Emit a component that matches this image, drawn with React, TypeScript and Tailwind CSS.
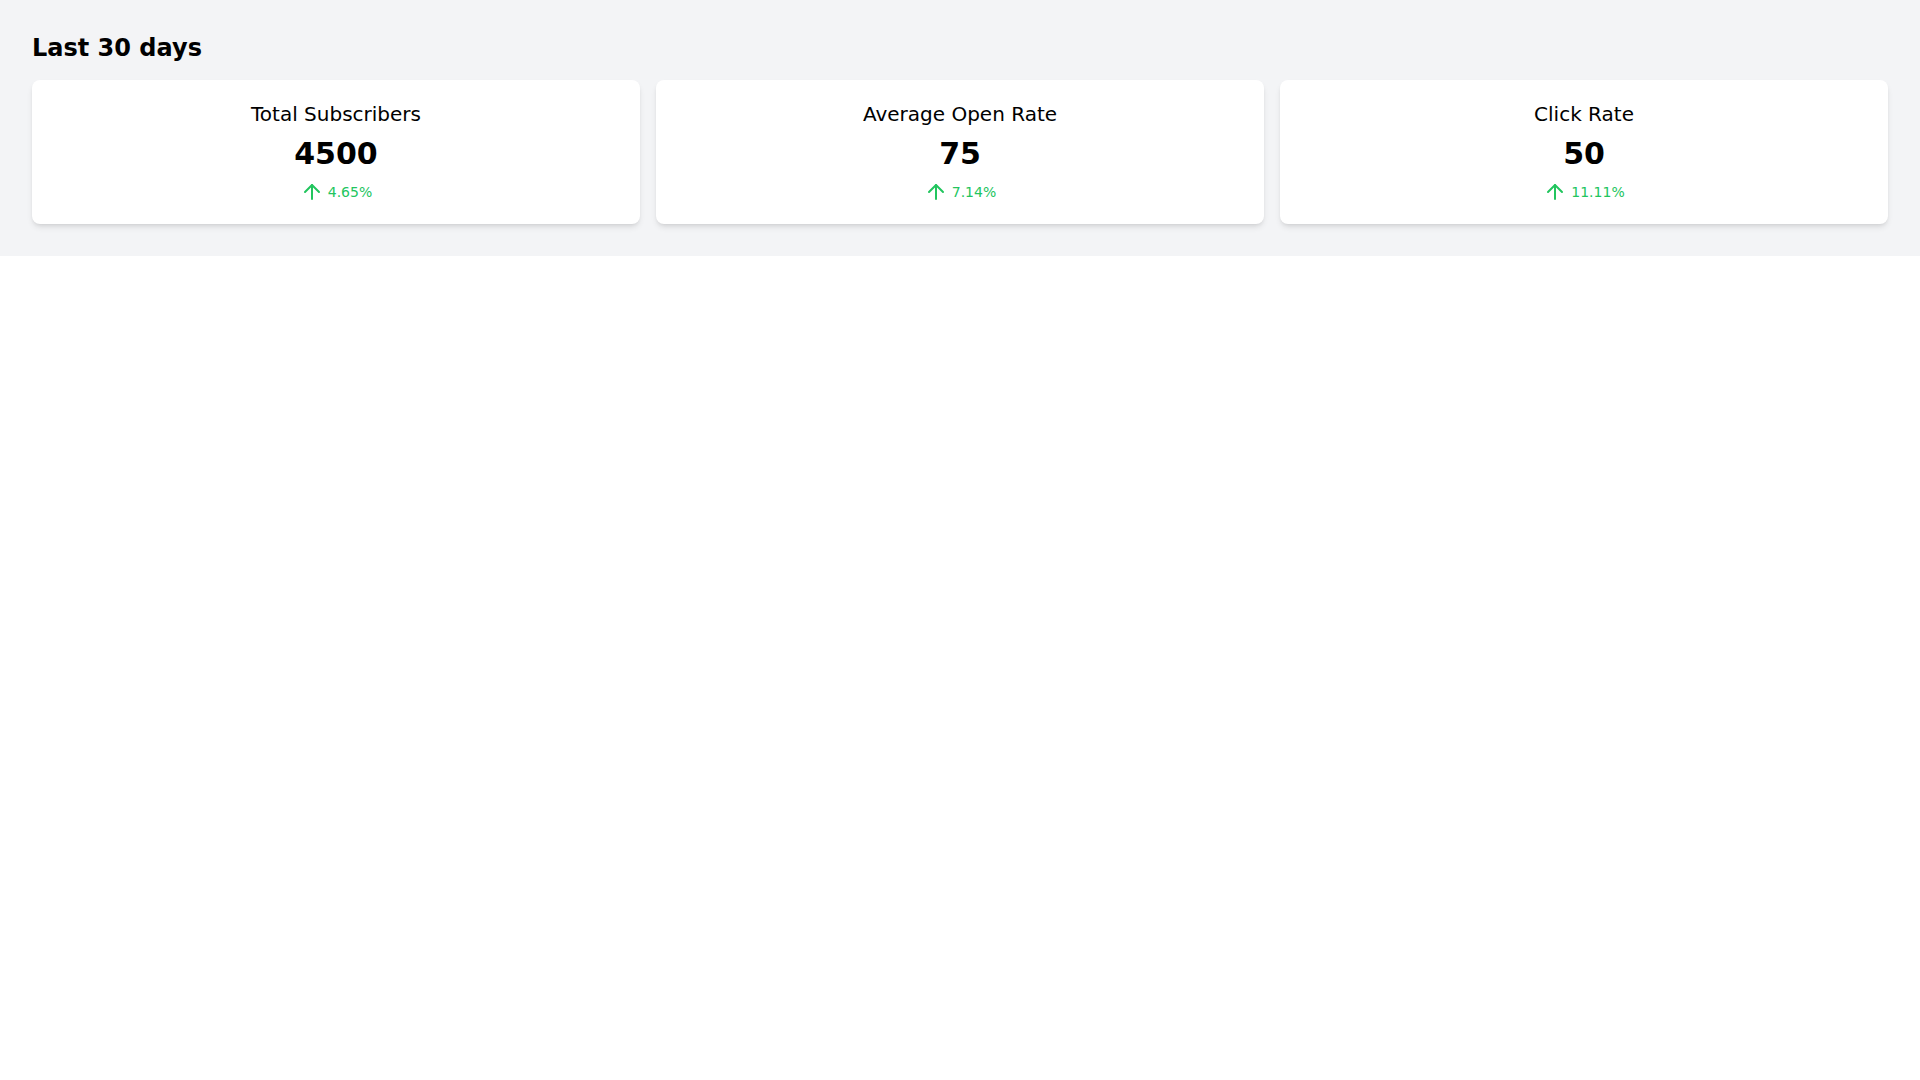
import React from "react";
import { ArrowUp } from "lucide-react";

interface Stat {
  id: number;
  name: string;
  value: string;
  change: string;
}

const stats: Stat[] = [
  { id: 1, name: "Total Subscribers", value: "4500", change: "4.65%" },
  { id: 2, name: "Average Open Rate", value: "75", change: "7.14%" },
  { id: 3, name: "Click Rate", value: "50", change: "11.11%" },
];

const App = () => {
  return (
    <div className="min-h-screen bg-white font-['DejaVu_Sans',sans-serif] text-black">
      <section className="bg-[#f3f4f6] p-8">
        <h2 className="mb-4 text-2xl font-bold">Last 30 days</h2>
        <div className="grid grid-cols-3 gap-4">
          {stats.map((stat) => (
            <div
              key={stat.id}
              className="flex flex-col items-center rounded-lg bg-white p-5 shadow-md"
            >
              <h3 className="mb-2 text-xl">{stat.name}</h3>
              <p className="text-3xl font-bold">{stat.value}</p>
              <div className="mt-2 flex items-center gap-1 text-sm text-[#22c55e]">
                <ArrowUp className="h-6 w-6" />
                <span>{stat.change}</span>
              </div>
            </div>
          ))}
        </div>
      </section>
    </div>
  );
};

export default App;
